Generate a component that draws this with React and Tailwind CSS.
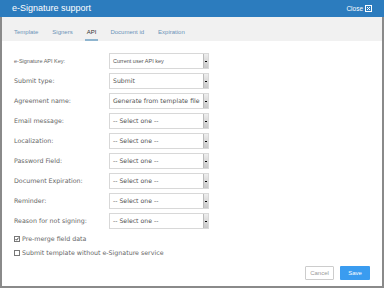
import React from 'react';

const rows = [
  { label: 'e-Signature API Key:', value: 'Current user API key', small: true },
  { label: 'Submit type:', value: 'Submit' },
  { label: 'Agreement name:', value: 'Generate from template file' },
  { label: 'Email message:', value: '-- Select one --' },
  { label: 'Localization:', value: '-- Select one --' },
  { label: 'Password Field:', value: '-- Select one --' },
  { label: 'Document Expiration:', value: '-- Select one --' },
  { label: 'Reminder:', value: '-- Select one --' },
  { label: 'Reason for not signing:', value: '-- Select one --' },
];

const tabs = ['Template', 'Signers', 'API', 'Document id', 'Expiration'];

const Select = ({ value, small }) => (
  <div className="flex h-[16px] w-[100px] items-stretch border border-[#d8d8d8] bg-white">
    <div
      className={`flex-1 overflow-hidden whitespace-nowrap pl-[3px] leading-[14px] text-[#555] ${
        small ? "font-['Liberation_Sans',sans-serif] text-[5.5px]" : 'text-[6.2px]'
      }`}
    >
      {value}
    </div>
    <div className="flex w-[5px] items-center justify-center border-l border-[#bbb] bg-gradient-to-b from-[#eee] to-[#c8c8c8]">
      <div className="h-[1px] w-[2px] bg-black" />
    </div>
  </div>
);

const App = () => {
  return (
    <div className="h-[290px] w-[384px] bg-white font-['DejaVu_Sans',sans-serif]">
      <div className="flex h-[288px] flex-col border-x-2 border-b-2 border-[#8a8a8a]">
        <div className="-mx-[2px] flex h-[17px] items-center justify-between bg-[#2c7cbe] px-[12px] text-white">
          <span className="font-['Liberation_Sans',sans-serif] text-[9px]">e-Signature support</span>
          <span className="flex items-center gap-[2px] font-['Liberation_Sans',sans-serif] text-[6.5px]">
            Close
            <svg width="7" height="7" viewBox="0 0 7 7">
              <rect x="0.5" y="0.5" width="6" height="6" fill="none" stroke="white" strokeWidth="1" />
              <path d="M2 2 L5 5 M5 2 L2 5" stroke="white" strokeWidth="1" />
            </svg>
          </span>
        </div>
        <div className="flex h-[24px] items-end gap-[10px] bg-[#f1f1f1] px-[10px] text-[#6b93b8]">
          {tabs.map((t) => (
            <div
              key={t}
              className={`px-[2px] pb-[2px] font-['Liberation_Sans',sans-serif] text-[6px] ${
                t === 'API' ? 'border-b-2 border-[#8fb5cf] text-[#333]' : 'border-b-2 border-transparent'
              }`}
            >
              {t}
            </div>
          ))}
        </div>
        <div className="flex flex-1 flex-col px-[12px] pt-[12px]">
          <div className="flex flex-col gap-[4px]">
            {rows.map((r) => (
              <div key={r.label} className="flex items-center">
                <div
                  className={`w-[95px] text-[#666] ${
                    r.small ? "font-['Liberation_Sans',sans-serif] text-[5.5px]" : 'text-[6.3px]'
                  }`}
                >
                  {r.label}
                </div>
                <Select value={r.value} small={r.small} />
              </div>
            ))}
          </div>
          <div className="mt-[5px] flex flex-col gap-[5px] text-[6.3px] text-[#666]">
            <div className="flex items-center gap-[2px]">
              <div className="flex h-[6px] w-[6px] items-center justify-center border border-[#777] bg-white">
                <svg width="4" height="4" viewBox="0 0 4 4">
                  <path d="M0.5 2 L1.6 3.2 L3.6 0.6" stroke="#333" strokeWidth="0.9" fill="none" />
                </svg>
              </div>
              Pre-merge field data
            </div>
            <div className="flex items-center gap-[2px]">
              <div className="h-[6px] w-[6px] border border-[#777] bg-white" />
              Submit template without e-Signature service
            </div>
          </div>
          <div className="mt-auto mb-[6px] flex justify-end gap-[6px] font-['Liberation_Sans',sans-serif] text-[6px]">
            <div className="flex h-[14px] w-[29px] items-center justify-center rounded-[1px] border border-[#ccc] bg-white text-[#999]">
              Cancel
            </div>
            <div className="flex h-[14px] w-[30px] items-center justify-center rounded-[1px] bg-[#3a9cf0] text-white">
              Save
            </div>
          </div>
        </div>
      </div>
    </div>
  );
};

export default App;
